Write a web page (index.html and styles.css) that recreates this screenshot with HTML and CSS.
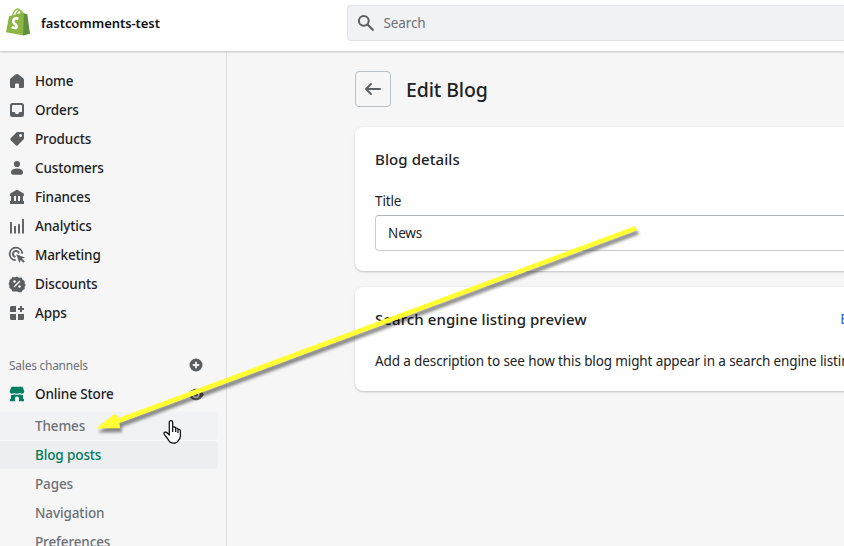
FILE: index.html
```html
<!DOCTYPE html>
<html lang="en">
<head>
<meta charset="utf-8">
<title>Edit Blog</title>
<link rel="stylesheet" href="styles.css">
</head>
<body>
<header class="topbar">
  <div class="brand">
    <svg class="logo" width="26" height="28" viewBox="0 0 26 28">
      <path d="M6.500 8.500C7 4 9.500 1 12 1c2 0 3 2 3.500 6M10 7c.5-3 2.500-5 4.500-4.500 1.500.5 2 2.500 2 4" fill="none" stroke="#95bf47" stroke-width="1.300"/>
      <path d="M3 8.300 17.300 4.500 18.200 27.500 0 24.200Z" fill="#8db543"/>
      <path d="M17.300 4.500 18.800 5.800 21.300 6.300 24 25.800 17.300 27.500Z" fill="#5e8e3e"/>
      <path d="M12.400 10.800c-3.200-1.400-5.200.3-5.200 2.600 0 2.500 3.600 2.800 3.400 5.200-.2 2-2.600 1.600-4.800.2" fill="none" stroke="#fff" stroke-width="2.700"/>
    </svg>
    <span class="store">fastcomments-test</span>
  </div>
  <div class="search">
    <svg width="20" height="20" viewBox="0 0 20 20"><circle cx="7.800" cy="7.800" r="4.900" fill="none" stroke="#5c5f62" stroke-width="2"/><path d="m11.500 11.500 5.300 5.300" stroke="#5c5f62" stroke-width="2.200" stroke-linecap="round"/></svg>
    <span>Search</span>
  </div>
</header>
<div class="body">
  <nav class="sidebar">
    <a class="item"><svg class="icon" viewBox="0 0 20 20"><path d="M9 3.300a1.700 1.700 0 0 1 2 0l5 3.700q1 .8 1 2v6.500q0 1.500-1.500 1.500H12v-3.500q0-1-1-1H9q-1 0-1 1V17H4.500Q3 17 3 15.500V9q0-1.200 1-2z"/></svg><span>Home</span></a>
    <a class="item"><svg class="icon" viewBox="0 0 20 20"><path fill-rule="evenodd" d="M5.500 3h9Q17 3 17 5.500v9q0 2.500-2.500 2.500h-9Q3 17 3 14.500v-9Q3 3 5.500 3zM6 5Q5 5 5 6v6h2q.8 0 1.200.8.3 1.200 1.200 1.200h1.200q.9 0 1.200-1.200.4-.8 1.200-.8h2V6q0-1-1-1z"/></svg><span>Orders</span></a>
    <a class="item"><svg class="icon" viewBox="0 0 20 20"><path fill-rule="evenodd" d="M10.500 3H16q1 0 1 1v5q0 1-.7 1.700l-5.600 5.600q-1 1-2 0l-5-5q-1-1 0-2l5.200-5.300Q9.500 3 10.500 3zM13.500 5a1.500 1.500 0 1 0 0 3 1.500 1.500 0 0 0 0-3z"/></svg><span>Products</span></a>
    <a class="item"><svg class="icon" viewBox="0 0 20 20"><circle cx="10" cy="6" r="3.100"/><path d="M4 14q.3-3.500 6-3.500t6 3.500q0 2.800-2 2.800H6q-2 0-2-2.800z"/></svg><span>Customers</span></a>
    <a class="item"><svg class="icon" viewBox="0 0 20 20"><path d="M9.300 3q.7-.4 1.400 0l5.600 3.200q.7.500.7 1.200V9H16v5h1v3H3v-3h1V9H3V7.400q0-.7.7-1.200zM7 9v5h2V9zm4 0v5h2V9z" fill-rule="evenodd"/></svg><span>Finances</span></a>
    <a class="item"><svg class="icon" viewBox="0 0 20 20"><path d="M4 7v10M8 11v6M12 9v8M16 4v13" transform="translate(0 -.3)" fill="none" stroke="#5c5f62" stroke-width="1.900" stroke-linecap="round"/></svg><span>Analytics</span></a>
    <a class="item"><svg class="icon" viewBox="0 0 20 20"><path d="M8 15.200A6.300 6.300 0 1 1 15.200 8M7.800 11.700A3 3 0 1 1 11.700 7.800" fill="none" stroke="#5c5f62" stroke-width="1.800" stroke-linecap="round"/><path d="m9.300 9.300 8.600 3.100-2.800 1.300 2.700 2.700-1.400 1.400-2.700-2.700-1.300 2.800z"/></svg><span>Marketing</span></a>
    <a class="item"><svg class="icon" viewBox="0 0 20 20"><path d="m10 2.200 2.200 1.200 2.500-.1 1.200 2.200 2.100 1.300-.1 2.500 1.100 1.700-1.100 2.200.1 2-2.100 1.300-1.200 2.200-2.500-.1L10 17.800l-2.200 0-2.500-.1-1.200-2.200L2 14.200l.1-2.500L1.200 10l.9-2.200.1-2 2-1.300 1.100-1.700 2.500.1z" transform="translate(.4 .4) scale(.96)"/><path d="m7 13 6-6" stroke="#fff" stroke-width="1.500"/><circle cx="7.500" cy="7.500" r="1.200" fill="#fff"/><circle cx="12.500" cy="12.500" r="1.200" fill="#fff"/></svg><span>Discounts</span></a>
    <a class="item"><svg class="icon" viewBox="0 0 20 20"><path d="M4.500 3H9v6H3V4.500Q3 3 4.500 3zM3 11h6v6H4.500Q3 17 3 15.500zM11 11h6v4.500q0 1.500-1.500 1.500H11z"/><path d="M14 3v6M11 6h6" stroke="#5c5f62" stroke-width="1.900"/></svg><span>Apps</span></a>
    <div class="section">
      <span>Sales channels</span>
      <svg class="icon" viewBox="0 0 20 20"><circle cx="10" cy="10" r="6.500"/><path d="M10 6.800v6.400M6.800 10h6.400" stroke="#f6f6f7" stroke-width="1.800"/></svg>
    </div>
    <a class="item channel">
      <svg class="icon green" viewBox="0 0 20 20"><path d="M4.500 2.800h11L17.200 7v1q-.3 1.700-2.200 1.700-1.400 0-2.300-1-1 1-2.700 1t-2.700-1q-.9 1-2.300 1Q3.100 9.700 2.800 8V7zM4 10.800q2 .4 3.300-.6 2.700 1.200 5.400 0 1.300 1 3.300.6V15h1v2.200h-5V14q0-1.500-2-1.500T8 14v3.200H3V15h1z"/></svg>
      <span>Online Store</span>
      <svg class="icon eye" viewBox="0 0 20 20"><path d="M2.200 10.500q3-5.800 7.800-5.800t7.800 5.800q-3 5.800-7.800 5.800t-7.800-5.800z"/><circle cx="10" cy="10.500" r="3.700" fill="#f6f6f7"/><circle cx="10" cy="10.500" r="1.900"/></svg>
    </a>
    <a class="item sub hover"><span>Themes</span></a>
    <a class="item sub current"><span>Blog posts</span></a>
    <a class="item sub"><span>Pages</span></a>
    <a class="item sub"><span>Navigation</span></a>
    <a class="item sub"><span>Preferences</span></a>
  </nav>
  <main class="main">
    <div class="heading">
      <button class="back"><svg width="20" height="20" viewBox="0 0 20 20"><path d="M17 10H3.500M8 5l-5 5 5 5" fill="none" stroke="#5c5f62" stroke-width="1.900" stroke-linecap="round" stroke-linejoin="round"/></svg></button>
      <h1>Edit Blog</h1>
    </div>
    <section class="card details">
      <h2>Blog details</h2>
      <div class="label">Title</div>
      <div class="input">News</div>
    </section>
    <section class="card preview">
      <div class="row"><h2>Search engine listing preview</h2><a class="edit">Edit</a></div>
      <p>Add a description to see how this blog might appear in a search engine listing</p>
    </section>
  </main>
</div>
<svg class="overlay" width="844" height="546" viewBox="0 0 844 546">
  <path class="arrow" d="M635 226 118.500 418 115 413.500 96 428.500 120 428.300 119.500 423 637 230.300Z"/>
  <g transform="translate(163 420)"><path d="M6.300 15V2.500Q6.300.7 8 .7t1.700 1.800V8Q10 6.500 11.500 7q1.200.3 1.200 1.500Q14.500 7.600 15 9.400q2.400-.6 2.400 2v4.500q0 2.600-1.900 4.300-1.500 3-5 3-4 0-5.600-4.200L1.200 14.300Q.4 12.500 2 12q1.700-.2 4.300 3zM9.700 8v4M12.700 8.600V12M15 9.500V13" fill="#fff" stroke="#16161d" stroke-width="1.300" stroke-linejoin="round"/></g>
</svg>
</body>
</html>
```
FILE: styles.css
```css
* { box-sizing: border-box; }
html { overflow: hidden; }
body {
  margin: 0;
  width: 844px;
  height: 546px;
  overflow: hidden;
  background: #f6f6f7;
  color: #202223;
  font: 13.5px/20px "Noto Sans", "Open Sans", sans-serif;
  letter-spacing: -.12px;
  white-space: nowrap;
}
.topbar {
  display: flex;
  height: 51px;
  background: #fff;
  box-shadow: 0 1px 2px rgba(0, 0, 0, .22);
  position: relative;
}
.brand { flex: none; width: 347px; padding: 8px 0 0 6px; display: flex; }
.store { margin: 5px 0 0 9px; font-size: 13px; font-weight: 600; letter-spacing: -.06px; color: #111213; }
.search {
  flex: 1;
  height: 36px;
  margin-top: 5px;
  padding-left: 8px;
  display: flex;
  align-items: center;
  gap: 7.5px;
  border: 1px solid #e1e3e5;
  border-right: 0;
  border-radius: 4px 0 0 4px;
  background: #f1f2f4;
  color: #6d7175;
}
.body { display: flex; height: 495px; overflow: hidden; }
.sidebar { flex: none; width: 227px; padding-top: 16px; border-right: 1px solid #dfe1e3; }
.item {
  display: flex;
  align-items: center;
  height: 28px;
  width: 218px;
  margin-bottom: 1px;
  padding-left: 7px;
  font-weight: 500;
  border-radius: 0 4px 4px 0;
}
.icon { width: 20px; height: 20px; flex: none; fill: #5c5f62; }
.item .icon + span { margin-left: 8px; }
.item .green { fill: #008060; }
.section {
  display: flex;
  align-items: center;
  justify-content: space-between;
  height: 28px;
  width: 206px;
  margin: 24px 0 1px;
  padding-left: 9px;
  font-size: 12px;
  letter-spacing: -.26px;
  color: #6d7175;
}
.section span { padding-top: 1px; }
.channel { margin-bottom: 4px; padding-right: 12px; }
.eye { margin-left: auto; }
.sub { padding-left: 35px; color: #6d7175; }
.hover { background: #f1f2f3; }
.current { background: #edeeef; color: #007a5c; }
.main { flex: none; width: 760px; padding: 20px 0 0 128px; }
.heading { display: flex; align-items: center; gap: 15px; height: 36px; }
.back {
  width: 36px;
  height: 36px;
  padding: 0;
  display: grid;
  place-items: center;
  background: transparent;
  border: 1px solid #babfc3;
  border-radius: 4px;
}
h1, h2, p { margin: 0; }
h1 { font-size: 19.5px; line-height: 28px; font-weight: 500; padding-top: 2px; }
h2 { font-size: 15px; line-height: 24px; font-weight: 500; letter-spacing: .08px; }
.card {
  width: 620px;
  padding: 20px;
  background: #fff;
  border-radius: 8px;
  box-shadow: 0 0 5px rgba(23, 24, 24, .05), 0 1px 2px rgba(0, 0, 0, .18);
}
.details { height: 144px; margin-top: 20px; }
.label { margin-top: 20px; }
.input {
  height: 36px;
  margin-top: 4px;
  padding: 7px 12px;
  border: 1px solid #c9cccf;
  border-top-color: #aeb4b9;
  border-radius: 4px;
}
.preview { height: 104px; margin-top: 16px; }
.row { display: flex; justify-content: space-between; padding-right: 91px; }
.edit { color: #2c5fcb; line-height: 25px; }
.preview p { margin-top: 19px; }
.overlay { position: absolute; left: 0; top: 0; pointer-events: none; }
.arrow { fill: #ffff33; filter: drop-shadow(2px 4px 1.5px rgba(0, 0, 0, .45)); }
```
